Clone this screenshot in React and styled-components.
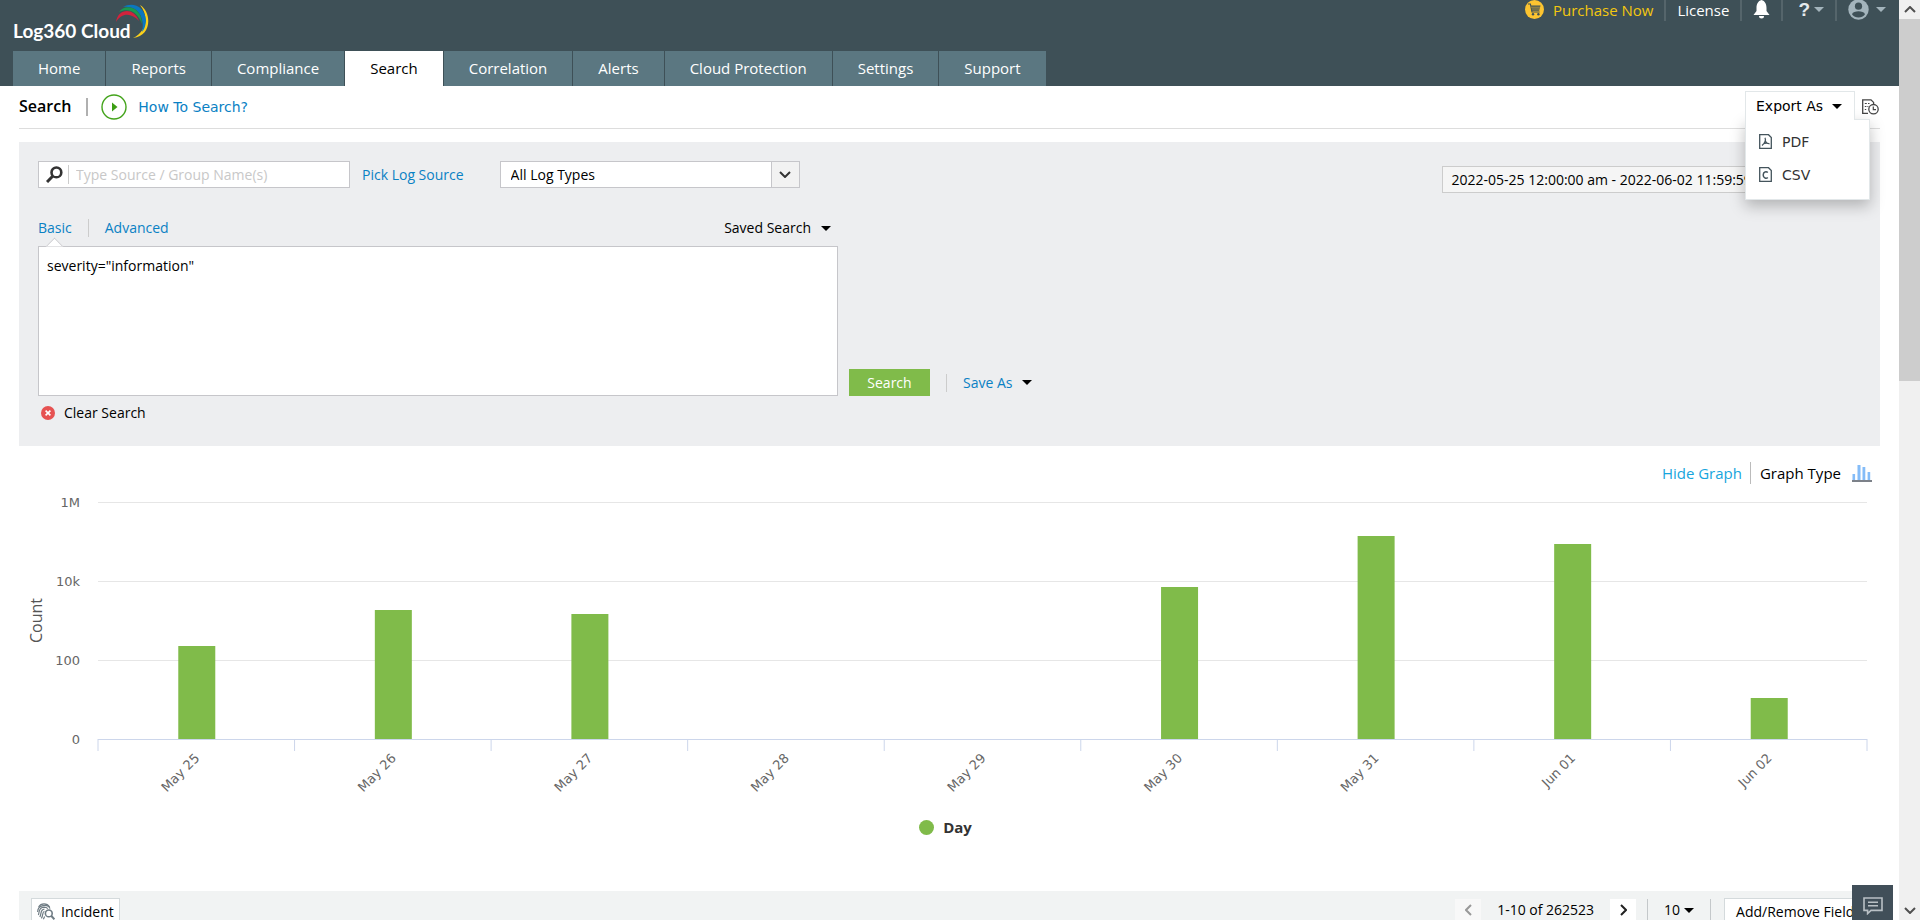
import React from "react";
import styled, { createGlobalStyle } from "styled-components";

const tabs = [
  "Home",
  "Reports",
  "Compliance",
  "Search",
  "Correlation",
  "Alerts",
  "Cloud Protection",
  "Settings",
  "Support",
];

const PLOT_HEIGHT = 237;

const yTicks = [
  { label: "1M", y: 0 },
  { label: "10k", y: 79 },
  { label: "100", y: 158 },
  { label: "0", y: 237 },
];

const days = [
  { label: "May 25", height: 93 },
  { label: "May 26", height: 129 },
  { label: "May 27", height: 125 },
  { label: "May 28", height: 0 },
  { label: "May 29", height: 0 },
  { label: "May 30", height: 152 },
  { label: "May 31", height: 203 },
  { label: "Jun 01", height: 195 },
  { label: "Jun 02", height: 41 },
];

export default function App() {
  return (
    <>
      <GlobalStyle />
      <Window>
        <Page>
          <Header />
          <SubHeader />
          <SearchPanel />
          <Graph />
          <ResultBar />
          <ChatButton aria-label="Chat">
            <ChatIcon />
          </ChatButton>
        </Page>
        <ScrollBar>
          <ScrollArrow>
            <Chevron d="M1 6 L6 1 L11 6" />
          </ScrollArrow>
          <ScrollThumb />
          <ScrollArrow $last>
            <Chevron d="M1 1 L6 6 L11 1" />
          </ScrollArrow>
        </ScrollBar>
      </Window>
    </>
  );
}

function Header() {
  return (
    <HeaderMain>
      <HeaderTop>
        <Brand href="#">
          Log360 Cloud
          <BrandArc />
        </Brand>
        <UserNav>
          <UserLink href="#" $gold>
            <CartIcon />
            Purchase Now
          </UserLink>
          <UserLink href="#">License</UserLink>
          <UserButton aria-label="Notifications">
            <BellIcon />
          </UserButton>
          <UserButton aria-label="Help" $tight>
            <Question>?</Question>
            <Caret $color="#a3b4bc" />
          </UserButton>
          <UserButton aria-label="Account">
            <UserIcon />
            <Caret $color="#a3b4bc" />
          </UserButton>
        </UserNav>
      </HeaderTop>
      <Tabs>
        {tabs.map((tab) => (
          <Tab href="#" key={tab} $active={tab === "Search"}>
            {tab}
          </Tab>
        ))}
      </Tabs>
    </HeaderMain>
  );
}

function SubHeader() {
  return (
    <TitleBar>
      <Title>Search</Title>
      <TitleDivider />
      <HowTo href="#">
        <PlayIcon />
        How To Search?
      </HowTo>
      <ExportWrap>
        <ExportButton>
          Export As
          <Caret $color="#000" />
        </ExportButton>
        <ExportMenu>
          <ExportItem>
            <PdfIcon />
            PDF
          </ExportItem>
          <ExportItem>
            <CsvIcon />
            CSV
          </ExportItem>
        </ExportMenu>
      </ExportWrap>
      <IconButton aria-label="Export history">
        <HistoryIcon />
      </IconButton>
    </TitleBar>
  );
}

function SearchPanel() {
  return (
    <Panel>
      <FilterRow>
        <SourceBox>
          <SearchIcon />
          <SourceInput
            type="text"
            aria-label="Source"
            placeholder="Type Source / Group Name(s)"
          />
        </SourceBox>
        <SourceLink href="#">Pick Log Source</SourceLink>
        <SelectBox>
          <LogSelect aria-label="Log type" defaultValue="all">
            <option value="all">All Log Types</option>
          </LogSelect>
          <SelectArrow>
            <Chevron d="M1 1 L6 6 L11 1" />
          </SelectArrow>
        </SelectBox>
        <DateButton>
          2022-05-25 12:00:00 am - 2022-06-02 11:59:59 pm
        </DateButton>
      </FilterRow>
      <ModeRow>
        <ModeLink href="#" $active>
          Basic
        </ModeLink>
        <ThinDivider />
        <ModeLink href="#">Advanced</ModeLink>
        <SavedSearch>
          Saved Search
          <Caret $color="#000" />
        </SavedSearch>
      </ModeRow>
      <QueryRow>
        <Query aria-label="Query" defaultValue={'severity="information"'} />
        <QueryActions>
          <SearchButton>Search</SearchButton>
          <ThinDivider />
          <SaveAs>
            Save As
            <Caret $color="#000" />
          </SaveAs>
        </QueryActions>
      </QueryRow>
      <ClearButton>
        <ClearIcon />
        Clear Search
      </ClearButton>
    </Panel>
  );
}

function Graph() {
  const step = 100 / days.length;
  return (
    <GraphMain>
      <GraphTools>
        <HideLink href="#">Hide Graph</HideLink>
        <GraphType>
          Graph Type
          <ColumnsIcon />
        </GraphType>
      </GraphTools>
      <ChartRow>
        <AxisTitle>Count</AxisTitle>
        <Plot height="300" role="img" aria-label="Count by day">
          {yTicks.map((tick) => (
            <g key={tick.label}>
              <line
                x1="0"
                x2="100%"
                y1={tick.y + 0.5}
                y2={tick.y + 0.5}
                stroke={tick.y === PLOT_HEIGHT ? "#ccd6eb" : "#e6e6e6"}
              />
              <text x="-18" y={tick.y + 5} textAnchor="end">
                {tick.label}
              </text>
            </g>
          ))}
          {days.map((day, i) => (
            <svg key={day.label} x={`${(i + 0.5) * step}%`} overflow="visible">
              <rect
                x="-18"
                y={PLOT_HEIGHT - day.height}
                width="37"
                height={day.height}
                fill="#80bb4a"
              />
              <text
                transform={`translate(4 ${PLOT_HEIGHT + 20}) rotate(-45)`}
                textAnchor="end"
              >
                {day.label}
              </text>
            </svg>
          ))}
          {[...days, null].map((_, i) => (
            <line
              key={i}
              x1={`${i * step}%`}
              x2={`${i * step}%`}
              y1={PLOT_HEIGHT}
              y2={PLOT_HEIGHT + 12}
              stroke="#ccd6eb"
            />
          ))}
        </Plot>
      </ChartRow>
      <Legend>
        <LegendDot />
        Day
      </Legend>
    </GraphMain>
  );
}

function ResultBar() {
  return (
    <ResultMain>
      <IncidentButton>
        <IncidentIcon />
        Incident
      </IncidentButton>
      <Pager>
        <PageButton aria-label="Previous page" disabled>
          <Chevron d="M6 1 L1 6 L6 11" tall />
        </PageButton>
        <PageRange>1-10 of 262523</PageRange>
        <PageButton aria-label="Next page">
          <Chevron d="M1 1 L6 6 L1 11" tall />
        </PageButton>
      </Pager>
      <PageSize>
        10
        <Caret $color="#000" />
      </PageSize>
      <FieldsButton>Add/Remove Fields</FieldsButton>
    </ResultMain>
  );
}

function Chevron({ d, tall }) {
  return (
    <svg
      width={tall ? 7 : 12}
      height={tall ? 12 : 7}
      fill="none"
      stroke="currentColor"
      strokeWidth="2"
    >
      <path d={d} />
    </svg>
  );
}

function BrandArc() {
  return (
    <ArcSvg width="34" height="35" viewBox="0 0 34 35">
      <path d="M24 1 C36 8 36 32 17 34 C31 27 33 12 24 1Z" fill="#fbd11b" />
      <path
        d="M7 3 C17 -3 29 3 30 16 C30 21 28 26 26 28 C29 15 23 1 7 3Z"
        fill="#0b78bf"
      />
      <path d="M3 8 C9 -1 26 3 26 20 C21 7 12 4 3 8Z" fill="#1a9a50" />
      <path d="M0 18 C2 4 18 3 23 17 C16 9 6 8 0 18Z" fill="#d2233c" />
    </ArcSvg>
  );
}

function CartIcon() {
  return (
    <svg width="19" height="19" viewBox="0 0 19 19">
      <circle cx="9.5" cy="9.5" r="9.5" fill="#fcc430" />
      <path
        d="M3 4 h2.4 l1.6 8 h7.6"
        fill="none"
        stroke="#3e5057"
        strokeWidth="1.2"
      />
      <path d="M6 5.5 h9.5 l-1.3 5.3 h-7.2z" fill="#3e5057" />
      <path d="M6.4 7.2 h8.6 M6.8 9 h8" stroke="#fcc430" strokeWidth=".6" />
      <circle cx="8" cy="14.2" r="1.2" fill="#3e5057" />
      <circle cx="13.4" cy="14.2" r="1.2" fill="#3e5057" />
    </svg>
  );
}

function BellIcon() {
  return (
    <svg width="17" height="19" viewBox="0 0 17 19" fill="#fff">
      <path d="M8.5 0 C12 1 13.5 4 13.5 8 V11 L16.5 15 H.5 L3.5 11 V8 C3.5 4 5 1 8.5 0Z" />
      <path d="M6 16 h5 a2.5 2.5 0 0 1 -5 0z" />
    </svg>
  );
}

function UserIcon() {
  return (
    <svg width="21" height="21" viewBox="0 0 21 21">
      <circle cx="10.5" cy="10.5" r="10.2" fill="#a3b4bc" />
      <circle cx="10.5" cy="7.2" r="3.6" fill="#3e5057" />
      <path d="M4 15.2 C5.5 11.4 15.5 11.4 17 15.2 C14 19.6 7 19.6 4 15.2Z" fill="#3e5057" />
    </svg>
  );
}

function PlayIcon() {
  return (
    <svg width="26" height="26" viewBox="0 0 26 26">
      <circle cx="13" cy="13" r="12" fill="none" stroke="#44a41c" strokeWidth="1.4" />
      <path d="M11 8.5 L16.5 13 L11 17.5Z" fill="#3c9e14" />
    </svg>
  );
}

function PdfIcon() {
  return (
    <svg width="13" height="15" viewBox="0 0 13 15" fill="none" stroke="#44545c">
      <path d="M.7 .7 H9.5 L12.3 3.5 V14.3 H.7Z" strokeWidth="1.3" />
      <path d="M6 3.8 C7 6 7 8 3 11.5 M6.3 7 C7 9 8.5 9.6 10.5 9.8 M4.6 9.8 C6 9 8 9 10.3 9.6" strokeWidth="1.2" />
    </svg>
  );
}

function CsvIcon() {
  return (
    <svg width="13" height="15" viewBox="0 0 13 15" fill="none" stroke="#44545c">
      <path d="M.7 .7 H9.5 L12.3 3.5 V14.3 H.7Z" strokeWidth="1.3" />
      <path d="M8.8 5.6 C7.5 4.2 4.2 4.4 4.2 8 C4.2 11.6 7.5 11.8 8.8 10.4" strokeWidth="1.5" />
    </svg>
  );
}

function HistoryIcon() {
  return (
    <svg width="17" height="16" viewBox="0 0 17 16" fill="none" stroke="#444">
      <path d="M6 14.4 H.7 V.8 H9 L11.6 3.4 V5" strokeWidth="1.3" />
      <path d="M2.8 4.5 h2 M6 4.5 h1.5 M2.8 7.5 h1.6 M5.4 7.5 h1 M2.8 10.5 h1.4" strokeWidth="1.2" />
      <circle cx="11.5" cy="10.2" r="4.7" strokeWidth="1.3" />
      <path d="M11.3 7.5 V10.6 H14" strokeWidth="1.2" />
    </svg>
  );
}

function SearchIcon() {
  return (
    <svg width="17" height="17" viewBox="0 0 17 17" fill="none" stroke="#333">
      <circle cx="10.4" cy="6.4" r="4.9" strokeWidth="2.6" />
      <path d="M6.6 10.2 L1 16" strokeWidth="3" />
    </svg>
  );
}

function ClearIcon() {
  return (
    <svg width="14" height="14" viewBox="0 0 14 14">
      <circle cx="7" cy="7" r="7" fill="#e65252" />
      <path d="M4.6 4.6 L9.4 9.4 M9.4 4.6 L4.6 9.4" stroke="#fff" strokeWidth="1.6" />
    </svg>
  );
}

function ColumnsIcon() {
  return (
    <svg width="20" height="17" viewBox="0 0 20 17">
      <path d="M.5 9h2.6v6H.5z M5.5 0h3v15h-3z M10.5 2h2.8v13h-2.8z M15.6 7h2.6v8h-2.6z" fill="#84bcf8" />
      <path d="M0 16 H20" stroke="#444b57" strokeWidth="1.4" />
    </svg>
  );
}

function IncidentIcon() {
  return (
    <svg width="18" height="17" viewBox="0 0 18 17" fill="none" stroke="#6f7c84">
      <path d="M1.6 4 C4 -.2 10 -.2 12.6 4" strokeWidth="1.2" />
      <path d="M.7 9 C.4 1.6 11 .4 13 5.6" strokeWidth="1.2" />
      <path d="M1.4 12 C2.4 9 1.6 4.4 7 4.2 C9 4.2 10 4.8 10.8 5.6" strokeWidth="1.2" />
      <path d="M2.8 14 C4.6 11 3 6.6 7.4 6.2 M4.4 15.4 C6.4 12.4 5 9 7.4 8.2 M6.4 16.2 L7.6 13.6" strokeWidth="1.2" />
      <circle cx="11.8" cy="10.4" r="3.4" strokeWidth="1.6" />
      <path d="M14.2 12.8 L17.4 16.2" strokeWidth="2" />
    </svg>
  );
}

function ChatIcon() {
  return (
    <svg width="20" height="18" viewBox="0 0 20 18" fill="none" stroke="#b9c0c5" strokeWidth="1.6">
      <path d="M1 1 H19 V13.4 H8 L4.6 16.6 V13.4 H1Z" />
      <path d="M5 5.2 H15 M5 8.8 H15" />
    </svg>
  );
}

const GlobalStyle = createGlobalStyle`
  * {
    box-sizing: border-box;
  }
  body {
    margin: 0;
    overflow: hidden;
    background: #fff;
    color: #000;
    font-family: "Open Sans", "Noto Sans", sans-serif;
    font-size: 14px;
    line-height: 20px;
  }
  a {
    text-decoration: none;
  }
  button, input, select, textarea {
    font: inherit;
    color: inherit;
    margin: 0;
  }
  button {
    border: none;
    background: none;
    padding: 0;
    cursor: pointer;
    white-space: nowrap;
  }
  svg {
    flex: none;
  }
`;
const Window = styled.div`
  display: flex;
  height: 100vh;
`;
const Page = styled.div`
  position: relative;
  flex: 1;
  min-width: 0;
  overflow: hidden;
`;
const ScrollBar = styled.div`
  display: flex;
  flex-direction: column;
  width: 21px;
  background: #f0f0f0;
`;
const ScrollArrow = styled.div`
  display: flex;
  align-items: center;
  justify-content: center;
  height: 19px;
  color: #505050;
  margin-top: ${(props) => (props.$last ? "auto" : "0")};
`;
const ScrollThumb = styled.div`
  height: calc(40% - 6px);
  background: #cdcdcd;
`;
const Caret = styled.span`
  flex: none;
  border: 5px solid transparent;
  border-top-color: ${(props) => props.$color};
  border-bottom: none;
`;

/* header */
const HeaderMain = styled.header`
  display: flex;
  flex-direction: column;
  justify-content: space-between;
  height: 86px;
  padding-left: 13px;
  background: #3e5057;
`;
const HeaderTop = styled.div`
  display: flex;
  justify-content: space-between;
`;
const Brand = styled.a`
  display: flex;
  padding-top: 20px;
  color: #fff;
  font-family: Lato, sans-serif;
  font-size: 19px;
  font-weight: 700;
  line-height: 22px;
`;
const ArcSvg = styled.svg`
  margin: -16px 0 0 -15px;
`;
const UserNav = styled.nav`
  display: flex;
  height: 21px;
  padding-right: 2px;
  font-size: 15px;
  > * {
    padding: 0 11px 2px;
  }
  > * + * {
    border-left: 2px solid #55656b;
  }
`;
const UserLink = styled.a`
  display: flex;
  align-items: center;
  gap: 9px;
  color: ${(props) => (props.$gold ? "#f3c70f" : "#fff")};
`;
const UserButton = styled.button`
  display: flex;
  align-items: center;
  gap: ${(props) => (props.$tight ? "4px" : "7px")};
`;
const Question = styled.span`
  padding-left: 4px;
  color: #e4e9eb;
  font-family: "Liberation Sans", sans-serif;
  font-size: 19px;
  font-weight: 700;
  line-height: 21px;
`;
const Tabs = styled.nav`
  display: flex;
`;
const Tab = styled.a`
  padding: 0 25px;
  border-right: 1px solid #3e5057;
  background: ${(props) => (props.$active ? "#fff" : "#5b7781")};
  color: ${(props) => (props.$active ? "#000" : "#fff")};
  font-size: 15px;
  line-height: 35px;
`;

/* title bar */
const TitleBar = styled.div`
  display: flex;
  align-items: center;
  height: 43px;
  margin: 0 19px;
  border-bottom: 1px solid #ddd;
`;
const Title = styled.h1`
  margin: 0;
  padding-bottom: 2px;
  font-size: 16px;
  font-weight: 600;
`;
const TitleDivider = styled.span`
  width: 2px;
  height: 18px;
  margin: 0 13px 0 15px;
  background: #b0b0b0;
`;
const HowTo = styled.a`
  display: flex;
  align-items: center;
  gap: 11px;
  color: #0a81c4;
  font-family: "DejaVu Sans", sans-serif;
  font-size: 14px;
`;
const ExportWrap = styled.div`
  position: relative;
  align-self: flex-end;
  margin-left: auto;
  font-family: "DejaVu Sans", sans-serif;
`;
const ExportButton = styled.button`
  position: relative;
  z-index: 2;
  display: flex;
  align-items: center;
  gap: 9px;
  width: 110px;
  height: 29px;
  margin-bottom: 8px;
  padding: 0 10px;
  border: 1px solid #e2e7e9;
  border-bottom: none;
  background: #fff;
`;
const ExportMenu = styled.div`
  position: absolute;
  z-index: 1;
  top: 28px;
  left: 0;
  width: 125px;
  padding: 5px 0 8px;
  border: 1px solid #e2e7e9;
  background: #fff;
  box-shadow: 0 6px 14px rgba(0, 0, 0, 0.25);
`;
const ExportItem = styled.button`
  display: flex;
  align-items: center;
  gap: 10px;
  width: 100%;
  height: 33px;
  padding: 0 13px;
  color: #333;
`;
const IconButton = styled.button`
  display: flex;
  margin: 0 1px 0 7px;
`;

/* search panel */
const Panel = styled.section`
  height: 304px;
  margin: 13px 19px 0;
  padding: 19px;
  background: #edeef0;
`;
const FilterRow = styled.div`
  display: flex;
  align-items: flex-start;
  height: 32px;
`;
const SourceBox = styled.div`
  display: flex;
  align-items: center;
  gap: 5px;
  width: 312px;
  height: 27px;
  margin-right: 12px;
  padding: 0 7px;
  border: 1px solid #c6c6ca;
  background: #fff;
`;
const SourceInput = styled.input`
  flex: 1;
  min-width: 0;
  height: 19px;
  padding: 0 7px;
  border: none;
  border-left: 1px solid #ccc;
  outline: none;
  &::placeholder {
    color: #c8c8c8;
  }
`;
const SourceLink = styled.a`
  color: #0a81c4;
  line-height: 27px;
`;
const SelectBox = styled.div`
  display: flex;
  width: 300px;
  height: 27px;
  margin-left: 36px;
  border: 1px solid #c6c6ca;
  background: #fff;
`;
const LogSelect = styled.select`
  flex: 1;
  padding: 0 10px;
  border: none;
  background: none;
  appearance: none;
`;
const SelectArrow = styled.span`
  display: flex;
  align-items: center;
  justify-content: center;
  width: 28px;
  border-left: 1px solid #c6c6ca;
  background: #f2f2f2;
  color: #333;
`;
const DateButton = styled.button`
  height: 27px;
  margin: 5px 0 0 auto;
  padding: 0 83px 0 9px;
  border: 1px solid #ccc;
  background: #f5f5f5;
  line-height: 24px;
`;
const ModeRow = styled.div`
  display: flex;
  align-items: center;
  width: 800px;
  height: 22px;
  margin: 24px 0 7px;
`;
const ThinDivider = styled.span`
  width: 1px;
  height: 18px;
  margin: 0 16px;
  background: #ccc;
`;
const ModeLink = styled.a`
  position: relative;
  color: #0a81c4;
  ${(props) =>
    props.$active &&
    `
    &::after {
      content: "";
      position: absolute;
      left: 10px;
      top: 22px;
      width: 12px;
      height: 12px;
      border: 1px solid #c6c6ca;
      border-right: none;
      border-bottom: none;
      background: #fff;
      clip-path: polygon(0 0, 100% 0, 0 100%);
      transform: rotate(45deg);
    }
  `}
`;
const SavedSearch = styled.button`
  display: flex;
  align-items: center;
  gap: 10px;
  margin: 0 7px 0 auto;
`;
const QueryRow = styled.div`
  display: flex;
  align-items: flex-end;
`;
const Query = styled.textarea`
  display: block;
  width: 800px;
  height: 150px;
  padding: 9px 8px;
  border: 1px solid #c6c6ca;
  background: #fff;
  outline: none;
  resize: none;
`;
const QueryActions = styled.div`
  display: flex;
  align-items: center;
  margin-left: 11px;
`;
const SearchButton = styled.button`
  width: 81px;
  height: 27px;
  background: #80bb4a;
  color: #fff;
`;
const SaveAs = styled.button`
  display: flex;
  align-items: center;
  gap: 10px;
  color: #0a81c4;
`;
const ClearButton = styled.button`
  display: flex;
  align-items: center;
  gap: 9px;
  margin-top: 7px;
  padding-left: 3px;
`;

/* graph */
const GraphMain = styled.section`
  height: 445px;
  padding: 16px 27px 0 30px;
`;
const GraphTools = styled.div`
  display: flex;
  justify-content: flex-end;
  font-size: 15px;
  line-height: 22px;
`;
const HideLink = styled.a`
  padding-right: 8px;
  color: #17a5dd;
`;
const GraphType = styled.button`
  display: flex;
  align-items: center;
  gap: 11px;
  padding-left: 9px;
  border-left: 1px solid #bbb;
`;
const ChartRow = styled.div`
  display: flex;
  height: 333px;
  padding-top: 18px;
`;
const AxisTitle = styled.div`
  width: 68px;
  height: 237px;
  color: #555;
  font-size: 16px;
  line-height: 12px;
  text-align: center;
  writing-mode: vertical-rl;
  transform: rotate(180deg);
`;
const Plot = styled.svg`
  flex: 1;
  margin-right: 5px;
  overflow: visible;
  font-family: "DejaVu Sans", sans-serif;
  font-size: 13px;
  text {
    fill: #666;
  }
`;
const Legend = styled.div`
  display: flex;
  align-items: center;
  justify-content: center;
  gap: 9px;
  padding-right: 11px;
  color: #333;
  font-size: 15px;
  font-weight: 700;
`;
const LegendDot = styled.span`
  width: 15px;
  height: 15px;
  border-radius: 50%;
  background: #80bb4a;
`;

/* results */
const ResultMain = styled.section`
  display: flex;
  align-items: flex-start;
  height: 60px;
  margin: 0 19px;
  padding: 7px 2px 0 12px;
  background: #f1f3f3;
`;
const IncidentButton = styled.button`
  display: flex;
  align-items: center;
  gap: 6px;
  height: 27px;
  padding: 0 5px;
  border: 1px solid #d4dadc;
  background: #fff;
`;
const Pager = styled.div`
  display: flex;
  margin-left: auto;
  padding: 1px 11px 0 0;
`;
const PageButton = styled.button`
  display: flex;
  align-items: center;
  justify-content: center;
  width: 26px;
  height: 22px;
  background: ${(props) => (props.disabled ? "#f8f8f8" : "#fff")};
  color: ${(props) => (props.disabled ? "#999" : "#222")};
`;
const PageRange = styled.span`
  padding: 0 16px;
  line-height: 22px;
`;
const PageSize = styled.button`
  display: flex;
  align-items: center;
  gap: 4px;
  height: 22px;
  margin: 1px 13px 0 0;
  padding: 0 16px;
  border: 1px solid #c4c8ca;
  border-width: 0 1px;
`;
const FieldsButton = styled.button`
  height: 27px;
  padding: 0 16px 0 11px;
  border: 1px solid #d4dadc;
  background: #fff;
`;
const ChatButton = styled.button`
  position: absolute;
  right: 6px;
  bottom: 0;
  display: flex;
  align-items: center;
  justify-content: center;
  width: 41px;
  height: 35px;
  padding-top: 6px;
  background: #414f59;
`;
